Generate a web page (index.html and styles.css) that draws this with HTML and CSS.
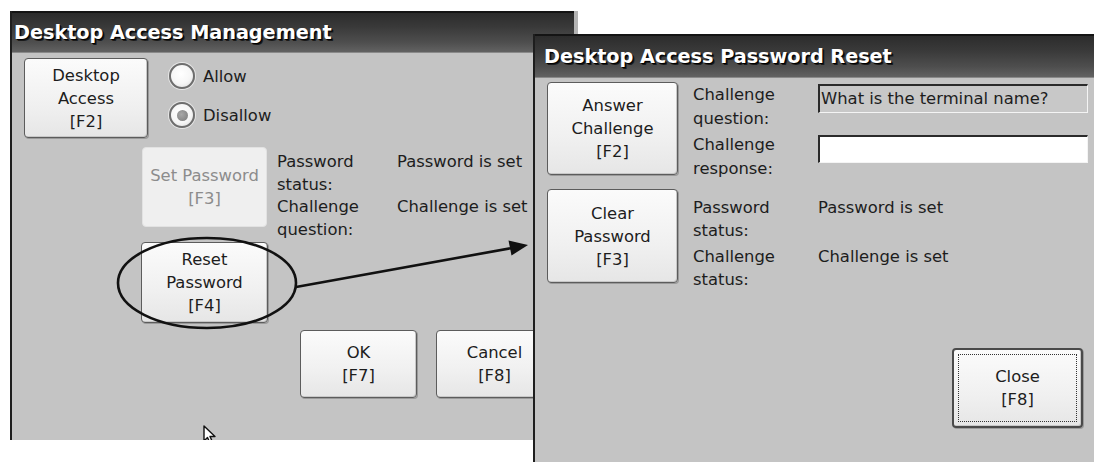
FILE: index.html
```html
<!DOCTYPE html>
<html lang="en">
<head>
<meta charset="utf-8">
<title>Desktop Access</title>
<link rel="stylesheet" href="styles.css">
</head>
<body>
<div class="desk">
  <section class="win win-main">
    <header class="title">Desktop Access Management</header>
    <div class="body main-body">
      <div class="row row-access">
        <button class="btn btn-access">Desktop<br>Access<br>[F2]</button>
        <div class="radios">
          <label class="radio"><span class="dot"></span>Allow</label>
          <label class="radio"><span class="dot checked"></span>Disallow</label>
        </div>
      </div>
      <div class="row row-set">
        <button class="btn btn-disabled">Set Password<br>[F3]</button>
        <div class="info info-main">
          <div class="lbl">Password<br>status:</div><div class="val">Password is set</div>
          <div class="lbl">Challenge<br>question:</div><div class="val">Challenge is set</div>
        </div>
      </div>
      <div class="row row-reset">
        <button class="btn btn-reset">Reset<br>Password<br>[F4]</button>
      </div>
      <div class="row row-ok">
        <button class="btn btn-ok">OK<br>[F7]</button>
        <button class="btn btn-ok">Cancel<br>[F8]</button>
      </div>
    </div>
    <svg class="cursor" width="16" height="20" viewBox="0 0 16 20">
      <path d="M1 1 L1 16 L4.5 12.5 L7 18 L9.5 17 L7 11.5 L12 11.5 Z" fill="#fff" stroke="#111" stroke-width="1.4" stroke-linejoin="round"/>
    </svg>
  </section>

  <section class="win win-reset">
    <header class="title">Desktop Access Password Reset</header>
    <div class="body reset-body">
      <div class="row row-answer">
        <button class="btn btn-big">Answer<br>Challenge<br>[F2]</button>
        <div class="lbls">
          <div class="lbl">Challenge<br>question:</div>
          <div class="lbl">Challenge<br>response:</div>
        </div>
        <div class="fields">
          <div class="field field-ro">What is the terminal name?</div>
          <div class="field field-edit"></div>
        </div>
      </div>
      <div class="row row-clear">
        <button class="btn btn-big">Clear<br>Password<br>[F3]</button>
        <div class="info info-reset">
          <div class="lbl">Password<br>status:</div><div class="val">Password is set</div>
          <div class="lbl">Challenge<br>status:</div><div class="val">Challenge is set</div>
        </div>
      </div>
      <div class="row row-close">
        <button class="btn btn-close"><span class="focus">Close<br>[F8]</span></button>
      </div>
    </div>
  </section>

  <svg class="annot" width="1094" height="462" viewBox="0 0 1094 462">
    <ellipse cx="207" cy="283" rx="89" ry="45" fill="none" stroke="#111" stroke-width="2.6"/>
    <line x1="296" y1="287" x2="512" y2="248" stroke="#111" stroke-width="2.6"/>
    <polygon points="528,245 511.5,255.5 508.5,240.5" fill="#111"/>
  </svg>
</div>
</body>
</html>
```
FILE: styles.css
```css
* { box-sizing: border-box; }
html, body { margin: 0; padding: 0; background: #fff; }
body {
  font-family: "DejaVu Sans", Verdana, sans-serif;
  font-size: 16.4px;
  color: #1d1d1d;
  width: 1094px;
  height: 462px;
  overflow: hidden;
}
.desk { position: relative; width: 1094px; height: 462px; }

.win {
  position: absolute;
  background: #c4c4c4;
  overflow: hidden;
  display: flex;
  flex-direction: column;
  border-left: 2px solid #1e1e1e;
}
.win-main { left: 10px; top: 11px; width: 568px; height: 429px; border-right: 4px solid #b4b4b4; }
.win-reset { left: 533px; top: 34px; width: 561px; height: 428px; }

.title {
  flex: none;
  display: flex;
  align-items: center;
  color: #fff;
  font-weight: bold;
  font-size: 19.3px;
  letter-spacing: -0.05px;
  background: linear-gradient(#2c2c2c 0%, #393939 35%, #4e4e4e 75%, #626262 100%);
  border-top: 2px solid #141414;
  border-bottom: 1px solid #8a8a8a;
  text-shadow: 1px 1px 0 #000, 2px 2px 0 #1a1a1a;
}
.win-main .title { height: 42px; padding-left: 2px; }
.win-reset .title { height: 44px; padding-left: 9px; }

.body { display: flex; flex-direction: column; }
.row { display: flex; align-items: flex-start; flex: none; }

.btn {
  font: inherit;
  color: #1d1d1d;
  line-height: 23px;
  padding: 0;
  border: 1px solid #5c5c5c;
  border-radius: 4px;
  background: linear-gradient(#fbfbfb, #f0f0f0 60%, #e6e6e6);
  box-shadow: inset -1px -1px 0 #c8c8c8, 1px 1px 0 #9a9a9a;
  display: flex;
  align-items: center;
  justify-content: center;
  text-align: center;
  flex: none;
}

/* main window */
.main-body { padding: 5px 0 0 12px; }
.row-access { height: 80px; }
.btn-access { width: 124px; height: 80px; }
.radios { display: flex; flex-direction: column; gap: 13px; margin-left: 21px; padding-top: 5px; }
.radio { display: flex; align-items: center; gap: 8px; height: 26px; }
.dot {
  width: 26px; height: 26px; border-radius: 50%;
  border: 2px solid #6e6e6e;
  background: radial-gradient(circle at 45% 40%, #ffffff 0, #f6f6f6 55%, #d9d9d9 100%);
  box-shadow: 0 0 0 1px #e6e6e6;
  display: flex; align-items: center; justify-content: center;
}
.dot.checked::after {
  content: "";
  width: 11px; height: 11px; border-radius: 50%;
  background: radial-gradient(circle at 40% 40%, #a8a8a8, #7a7a7a);
}

.row-set { margin: 9px 0 0 118px; height: 80px; }
.btn-disabled {
  width: 125px; height: 80px;
  color: #8c8c8c;
  border: 1px solid #e2e2e2;
  background: #efefef;
  box-shadow: none;
}
.info { display: grid; line-height: 22.5px; }
.info-main { grid-template-columns: 120px auto; margin-left: 10px; padding-top: 4px; }
.val { white-space: nowrap; }

.row-reset { margin: 15px 0 0 117px; height: 81px; }
.btn-reset { width: 127px; height: 81px; }

.row-ok { margin: 7px 0 0 276px; gap: 19px; }
.btn-ok { width: 117px; height: 68px; }

.cursor { position: absolute; left: 191px; top: 414px; }

/* reset window */
.reset-body { padding: 4px 0 0 12px; }
.btn-big { width: 131px; height: 93px; }
.row-answer { height: 93px; }
.lbls { display: flex; flex-direction: column; gap: 2px; margin-left: 15px; padding-top: 1px; line-height: 24px; width: 125px; flex: none; }
.fields { display: flex; flex-direction: column; gap: 22px; padding-top: 2px; }
.field {
  width: 270px;
  border-top: 2px solid #2a2a2a;
  border-left: 2px solid #2a2a2a;
  border-right: 1px solid #f4f4f4;
  border-bottom: 1px solid #f4f4f4;
  padding-left: 1px;
  line-height: 25px;
  white-space: nowrap;
}
.field-ro { height: 29px; background: #c8c8c8; }
.field-edit { height: 28px; background: #fff; }

.row-clear { margin-top: 14px; height: 94px; }
.row-clear .btn-big { height: 94px; }
.info-reset { grid-template-columns: 125px auto; margin-left: 15px; padding-top: 7px; line-height: 23px; row-gap: 3px; }

.row-close { justify-content: flex-end; margin-top: 65px; padding-right: 11px; }
.btn-close { width: 131px; height: 80px; padding: 4px; border: 2px solid #4a4a4a; }
.focus {
  width: 100%; height: 100%;
  border: 1px dotted #333;
  display: flex; align-items: center; justify-content: center;
}

.annot { position: absolute; left: 0; top: 0; pointer-events: none; }
```
